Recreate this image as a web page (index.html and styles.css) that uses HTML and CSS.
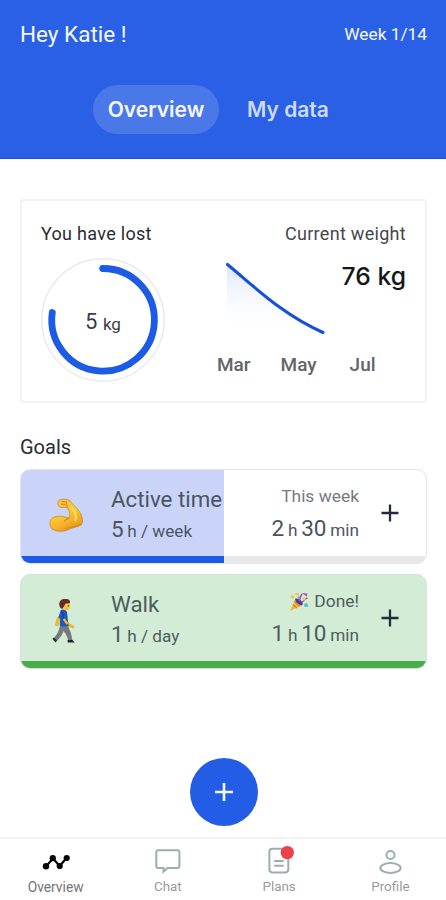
FILE: index.html
```html
<!DOCTYPE html>
<html lang="en">
<head>
<meta charset="utf-8">
<title>Overview</title>
<link rel="stylesheet" href="styles.css">
</head>
<body>
<div class="app">
  <header class="header">
    <div class="greeting-row"><h1 class="greeting">Hey Katie !</h1><span class="week">Week 1/14</span></div>
    <nav class="tabs"><span class="tab tab-active">Overview</span><span class="tab tab-data">My data</span></nav>
  </header>

  <main class="main">
    <section class="summary">
      <div class="lost">
        <h2 class="label">You have lost</h2>
        <div class="ring">
          <svg class="ring-art" viewBox="0 0 124 124" width="124" height="124" fill="none">
            <circle cx="62" cy="62" r="61.2" stroke="#e9eaec" stroke-width="1.4"/>
            <path d="M61.7 10.5A51.3 51.3 0 1 1 11.3 54.5" stroke="#1b5be5" stroke-width="6.8" stroke-linecap="round"/>
          </svg>
          <span class="ring-value">5 <small>kg</small></span>
        </div>
      </div>
      <div class="weight">
        <h2 class="label label-weight">Current weight</h2>
        <div class="weight-body">
          <svg class="chart" viewBox="0 0 100 76" width="100" height="76">
            <defs><linearGradient id="fade" x1="0" y1="0" x2="0" y2="1"><stop offset="0" stop-color="#d4dffc"/><stop offset="1" stop-color="#fff" stop-opacity="0"/></linearGradient></defs>
            <path d="M1 3C30 27 57 53 98 72H1Z" fill="url(#fade)" opacity=".8"/>
            <path d="M1.5 3.5C30 27 57 54 97 71.5" fill="none" stroke="#154fdc" stroke-width="3.1" stroke-linecap="round"/>
          </svg>
          <strong class="weight-value">76 kg</strong>
        </div>
        <div class="months"><span>Mar</span><span>May</span><span>Jul</span></div>
      </div>
    </section>

    <h2 class="goals-title">Goals</h2>
    <section class="goal goal-active">
      <div class="goal-icon">
        <svg class="arm" viewBox="0 0 36 36" width="35" height="35">
          <defs><linearGradient id="skin" x1="0" y1="0" x2="0.5" y2="1"><stop offset="0" stop-color="#f8c54a"/><stop offset=".6" stop-color="#fcc62f"/><stop offset="1" stop-color="#e99a20"/></linearGradient></defs>
          <path d="M10 2.5C13 .6 18 .8 21.5 2.7C24 7 29 9.5 32.5 16C34.5 20 35.3 25 33.2 27.5C29.5 30.2 24 30.1 20.5 32.3C14 35.3 6.2 34.6 2.6 31.3C0 28 .3 22.7 4 20.3C8.3 17.8 14.7 18.8 20.7 20.7C22.3 16.8 21 13 18.8 10C16.3 8.7 13.8 10.6 11 9.3C8.8 7.6 8.5 4.2 10 2.5Z" fill="url(#skin)" stroke="#c57c22" stroke-width=".7"/>
          <path d="M20.7 20.7C18.5 21 17 22.6 15.7 24.2M13.5 3.5L18 4.2L18.8 9.5M12.8 6.3L17 7M33 27C28 30 23 28.8 18 31.5" fill="none" stroke="#d58a1e" stroke-width="1.1" stroke-linecap="round"/>
          <path d="M23.5 10C27 14 28.5 19 27 23" fill="none" stroke="#ffdf65" stroke-width="2.2" stroke-linecap="round"/>
        </svg>
      </div>
      <div class="goal-info"><h3 class="goal-name">Active time</h3><p class="target">5 <small>h / week</small></p></div>
      <div class="goal-progress"><p class="status">This week</p><p class="amount">2 <small>h</small> 30 <small>min</small></p></div>
      <svg class="plus" viewBox="0 0 18 18" width="18" height="18"><path d="M9 .5V17.5M.5 9H17.5"/></svg>
      <div class="bar"><div class="bar-fill"></div></div>
    </section>
    <section class="goal goal-done">
      <div class="goal-icon">
        <svg class="walker" viewBox="0 0 24 46" width="24" height="46">
          <path d="M9 14L4 22L3 27.5L6.2 28.5L8 22Z" fill="#f1b62d"/>
          <path d="M11 20L17 27L21 29" fill="none" stroke="#efb52c" stroke-width="2.7" stroke-linecap="round"/>
          <path d="M8.2 27L16.2 27C16.6 31 20 35 20 41.5L16.1 42C15 37 12.3 34.5 11.5 32.8C10.8 37 7 40.5 5 43L1.9 40.2C5.5 36 7.2 32 8.2 27Z" fill="#777a7d"/>
          <path d="M2 39.5L5 42.5L3.8 44.6C2.3 43 1.2 42 .6 40.8ZM15.5 42.1L20 41.4L22.8 44.5H15.8Z" fill="#24272a"/>
          <path d="M8.8 12C11 10.8 14 11.8 15 14L16.5 27.8C13.5 28.8 10 28.7 7.7 27.5L8.2 21L6.4 19.5Z" fill="#1d58bd"/>
          <path d="M10.5 14L11.4 20" stroke="#123c92" stroke-width="1.1" fill="none"/>
          <path d="M11.8 21L15.5 26" stroke="#f1b62d" stroke-width="2.4" fill="none"/>
          <path d="M9 5H17L18.4 8L17.2 11C15.7 12.8 11 13 9.4 9Z" fill="#f7c13b"/>
          <path d="M7.3 7.2C6.8 2.5 10.3.6 13.9 1.1C17 1.1 18.8 3.2 17.8 5.2L13.5 5.4L12.2 8.1L10.3 10.8C8.5 10.4 7.6 9.1 7.3 7.2Z" fill="#632d25"/>
          <path d="M16.4 7.1V8.4" stroke="#4b2a20"/>
        </svg>
      </div>
      <div class="goal-info"><h3 class="goal-name">Walk</h3><p class="target">1 <small>h / day</small></p></div>
      <div class="goal-progress"><p class="status"><svg class="party" viewBox="0 0 20 20" width="20" height="20">
          <path d="M1 19L6.4 6.5L13.5 13Z" fill="#f0b636"/><path d="M3.8 12.6L8 16M5.2 9.2L11 14.3" stroke="#d38728" stroke-width="1.1"/>
          <path d="M6.2 6.8C9.3 5.4 15 10.2 13.4 13C10.8 14.2 5.6 9.7 6.2 6.8Z" fill="#57349a"/>
          <path d="M10 9C12 6 11 4 13 2M13 10C16 9 14 7 18.5 6" fill="none" stroke="#a445bd" stroke-width="1.4"/>
          <path d="M12.5 1L18.5 1.6L17.8 4.5Z" fill="#9d56d2"/><path d="M4.5 2L10 .8L9.5 4Z" fill="#f1be3d"/><path d="M15 12L18 11L19.5 14.5L15.5 15Z" fill="#56c1ca"/><circle cx="3.5" cy="5" r="1.4" fill="#efb636"/><circle cx="15" cy="6.8" r="1.8" fill="#f4cf4a"/><circle cx="10" cy="5.6" r="1.3" fill="#50b8cf"/>
        </svg><span>Done!</span></p><p class="amount">1 <small>h</small> 10 <small>min</small></p></div>
      <svg class="plus" viewBox="0 0 18 18" width="18" height="18"><path d="M9 .5V17.5M.5 9H17.5"/></svg>
      <div class="bar"><div class="bar-fill"></div></div>
    </section>
    <button class="add" aria-label="Add goal"><svg viewBox="0 0 20 20" width="20" height="20"><path d="M10 1V19M1 10H19"/></svg></button>
  </main>

  <nav class="bottom-nav">
    <div class="nav-item nav-current"><svg viewBox="0 0 28 28" width="28" height="28"><path d="M4.2 19.2L11 11.4L17.6 19L24.6 11" stroke="#050607" stroke-width="2.2"/><g fill="#050607" stroke="none"><circle cx="4" cy="19.2" r="3.2"/><circle cx="10.8" cy="11.2" r="3.1"/><circle cx="17.7" cy="19" r="3.1"/><circle cx="24.7" cy="11" r="3.1"/></g></svg><span>Overview</span></div>
    <div class="nav-item"><svg viewBox="0 0 28 28" width="28" height="28"><path d="M4.2 3.2H23.5Q25.4 3.2 25.4 5.1V19Q25.4 20.9 23.5 20.9H13.5L9.5 24.6V20.9H4.2Q2.3 20.9 2.3 19V5.1Q2.3 3.2 4.2 3.2Z"/></svg><span>Chat</span></div>
    <div class="nav-item"><svg viewBox="0 0 28 28" width="28" height="28"><path d="M7.2 1.8H17L23.3 7.9V22.6Q23.3 25.4 20.5 25.4H7.2Q4.4 25.4 4.4 22.6V4.6Q4.4 1.8 7.2 1.8ZM9.2 14H18.7M9.2 18.7H18.7"/><circle cx="22.3" cy="5.6" r="6.7" fill="#ec4148" stroke="none"/></svg><span>Plans</span></div>
    <div class="nav-item"><svg viewBox="0 0 28 28" width="28" height="28"><circle cx="14.5" cy="8" r="4.1"/><ellipse cx="14.5" cy="21" rx="10.2" ry="4.9"/></svg><span>Profile</span></div>
  </nav>
</div>
</body>
</html>
```

FILE: styles.css
```css
* { box-sizing: border-box; }
body { margin: 0; background: #fff; font-family: Roboto, sans-serif; color: #292c32; }
h1, h2, h3, p { margin: 0; font-weight: 400; }
svg { display: block; flex-shrink: 0; overflow: visible; }
.app { width: 446px; height: 900px; display: flex; flex-direction: column; overflow: hidden; }
.header { height: 159px; flex-shrink: 0; background: #2a60e6; border-bottom: 1px solid #1552dd; color: #f5f7ff; padding: 21px 19px 0 20px; }
.greeting-row { height: 26px; display: flex; justify-content: space-between; align-items: center; }
.greeting { font-size: 22.5px; line-height: 26px; }
.week { font-size: 17.3px; line-height: 26px; }
.tabs { display: flex; margin: 38px 0 0 73px; height: 49px; font-family: Inter, sans-serif; font-size: 21px; font-weight: 600; gap: 28px; line-height: 49px; }
.tab-active { width: 126px; text-align: center; border-radius: 25px; background: #4b78e9; }
.tab-data { color: #cddcff; }
.main { height: 678px; flex-shrink: 0; display: flex; flex-direction: column; padding: 40px 19px 0 20px; }
.summary { height: 204px; flex-shrink: 0; border: 2px solid #f2f2f3; border-radius: 4px; display: flex; justify-content: space-between; padding: 21px 19px 0 19px; }
.label { font-size: 18px; line-height: 24px; letter-spacing: .3px; white-space: nowrap; }
.lost { width: 125px; }
.ring { width: 124px; height: 124px; margin-top: 12px; display: grid; place-items: center; }
.ring > * { grid-area: 1 / 1; }
.ring-value { font-size: 22px; padding-top: 3px; color: #3b3e46; }
.ring-value small { font-size: 17px; display: inline-block; transform: translateY(1px); }
.weight { width: 190px; }
.label-weight { text-align: right; color: #45474c; }
.weight-body { display: flex; justify-content: space-between; height: 89px; padding: 15px 0 0 10px; }
.weight-value { font-family: Inter, sans-serif; font-size: 24.7px; line-height: 31px; font-weight: 500; color: #15171a; }
.months { display: flex; color: #646567; font-size: 19px; font-weight: 500; line-height: 24px; margin: 18px 0 0 1px; gap: 30px; }
.months span:last-child { margin-left: 3px; }
.goals-title { font-size: 20px; line-height: 24px; margin-top: 32px; }
.goal { height: 95px; flex-shrink: 0; margin-top: 10px; border: 1.5px solid #e4e4e9; border-radius: 10px; overflow: hidden; display: grid; grid-template: 86px 7px / 90px 120px 128px 1fr; }
.goal-active { background: linear-gradient(to right, #cad4f8 203px, #fff 203px); }
.goal-done { margin-top: 10px; background: #d3ecd5; border-color: #dcdfdf; }
.goal-icon { display: grid; place-items: center; }
.arm { margin-top: 5px; }
.walker { margin-top: 6px; margin-right: 4px; }
.goal-info { padding-top: 14px; color: #4b5463; white-space: nowrap; }
.goal-name { font-size: 22.3px; line-height: 30px; }
.target { font-size: 22.5px; line-height: 30px; }
.target small { font-size: 17.2px; margin-left: -2px; }
.goal-progress { text-align: right; padding-top: 14px; color: #4c535f; white-space: nowrap; }
.status { font-size: 17.4px; line-height: 25px; color: #777a7f; display: flex; justify-content: flex-end; align-items: center; gap: 5px; }
.amount { font-size: 22.5px; line-height: 38px; word-spacing: -1.8px; }
.amount small { font-size: 17.2px; }
.plus { margin: 34px 0 0 22px; fill: none; stroke: #242a3e; stroke-width: 2.3; }
.goal-done .goal-info, .goal-done .amount, .goal-done .status { color: #4d5d5f; }
.bar { grid-column: 1 / -1; background: #e8e8e9; height: 7px; }
.bar-fill { height: 100%; width: 203px; background: #1b5be5; }
.goal-done .bar-fill { width: 100%; background: #48ae4b; }
.add { width: 68px; height: 68px; flex-shrink: 0; border: 0; padding: 0; margin: 89px auto 0; position: relative; left: .5px; border-radius: 50%; background: #245de5; display: grid; place-items: center; }
.add path { fill: none; stroke: #f6f8ff; stroke-width: 2.6; }
.bottom-nav { height: 63px; border-top: 2px solid #f2f2f3; display: grid; grid-template-columns: repeat(4, 1fr); padding-left: 1px; }
.nav-item { display: flex; flex-direction: column; align-items: center; padding-top: 8px; color: #989a9c; font-size: 13.4px; line-height: 18px; gap: 3px; }
.nav-item svg { fill: none; stroke: #9cafb0; stroke-width: 2; }
.nav-current { color: #727477; font-size: 13.8px; padding-right: 2px; }
```
